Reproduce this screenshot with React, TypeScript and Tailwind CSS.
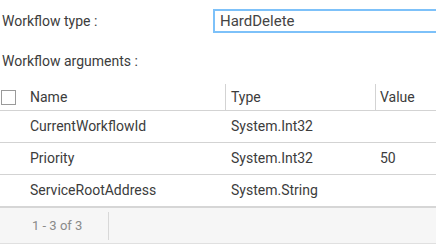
import React from "react";

const rows = [
  { name: "CurrentWorkflowId", type: "System.Int32", value: "" },
  { name: "Priority", type: "System.Int32", value: "50" },
  { name: "ServiceRootAddress", type: "System.String", value: "" },
];

const App: React.FC = () => {
  return (
    <div
      className="w-[436px] h-[247px] overflow-hidden bg-white text-[14px] text-[#3c3c3c]"
      style={{ fontFamily: "Roboto, 'Liberation Sans', sans-serif" }}
    >
      {/* Workflow type */}
      <div className="flex items-center pt-[9px] pl-[2px]">
        <div className="w-[211px] shrink-0">Workflow type :</div>
        <div className="flex-1 h-[24px] border-2 border-[#7dc1f9] border-r-0 flex items-center pl-[5px] text-[15px] text-[#444]">
          HardDelete
        </div>
      </div>

      {/* Workflow arguments */}
      <div className="pl-[2px] mt-[18px] h-[20px] leading-[20px]">Workflow arguments :</div>

      {/* Table */}
      <div className="mt-[13px]">
        <div className="flex h-[27px] items-center border-b border-[#d3d3d3]">
          <div className="w-[30px] shrink-0 pl-[1px] flex items-center">
            <div className="w-[15px] h-[15px] border border-[#9a9a9a] bg-white" />
          </div>
          <div className="w-[195px] shrink-0">Name</div>
          <div className="w-[150px] shrink-0 h-full flex items-center border-l border-[#d3d3d3] pl-[5px]">
            Type
          </div>
          <div className="flex-1 h-full flex items-center border-l border-[#d3d3d3] pl-[4px]">
            Value
          </div>
        </div>
        {rows.map((r, i) => (
          <div
            key={r.name}
            className={`flex items-center ${
              i === rows.length - 1 ? "border-b-2 border-[#d6d6d6] h-[33px]" : "border-b border-[#d3d3d3] h-[32px]"
            }`}
          >
            <div className="w-[30px] shrink-0" />
            <div className="w-[195px] shrink-0">{r.name}</div>
            <div className="w-[150px] shrink-0 pl-[6px]">{r.type}</div>
            <div className="flex-1 pl-[5px]">{r.value}</div>
          </div>
        ))}
        {/* Footer */}
        <div className="flex h-[36px] items-center bg-[#f6f6f6] border-b border-[#e0e0e0]">
          <div className="w-[109px] shrink-0 h-[28px] flex items-center pl-[32px] text-[13px] text-[#8a8a8a] border-r border-[#d8d8d8]">
            1 - 3 of 3
          </div>
        </div>
      </div>
    </div>
  );
};

export default App;
